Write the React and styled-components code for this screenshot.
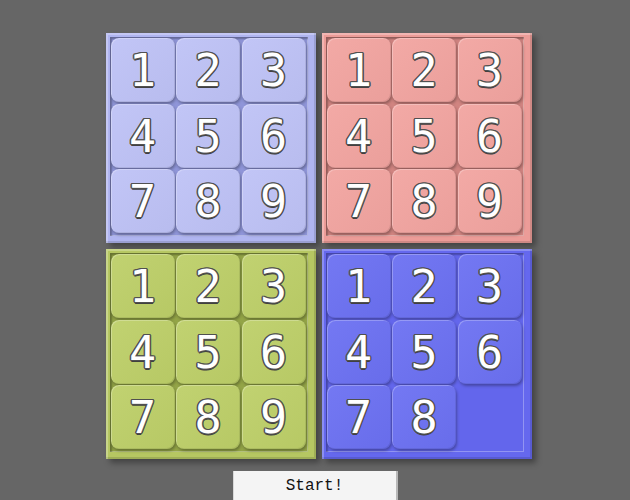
import React from "react";
import styled, { createGlobalStyle } from "styled-components";

const GlobalStyle = createGlobalStyle`
  html, body {
    margin: 0;
    padding: 0;
    background: #666666;
    height: 100%;
    overflow: hidden;
  }
`;

const boards = [
  { frame: "#b0b5f0", well: "#8f95d8", tile: "#bec2f6", tiles: [1, 2, 3, 4, 5, 6, 7, 8, 9] },
  { frame: "#ec9c98", well: "#d08480", tile: "#f2a4a0", tiles: [1, 2, 3, 4, 5, 6, 7, 8, 9] },
  { frame: "#b6c762", well: "#93a447", tile: "#bdcf68", tiles: [1, 2, 3, 4, 5, 6, 7, 8, 9] },
  { frame: "#6568ee", well: "#6366ec", tile: "#6b70f2", tiles: [1, 2, 3, 4, 5, 6, 7, 8, null] },
];

const App = () => {
  return (
    <>
      <GlobalStyle />
      <Page>
        <BoardGrid>
          {boards.map((b, i) => (
            <Board key={i} $frame={b.frame}>
              <Well $well={b.well}>
                {b.tiles.map((n, j) =>
                  n ? (
                    <Tile key={j} $color={b.tile}>
                      {n}
                    </Tile>
                  ) : (
                    <Empty key={j} />
                  )
                )}
              </Well>
            </Board>
          ))}
        </BoardGrid>
        <StartButton>Start!</StartButton>
      </Page>
    </>
  );
};

export default App;

const Page = styled.main`
  display: flex;
  flex-direction: column;
  align-items: center;
  padding-top: 33px;
`;

const BoardGrid = styled.div`
  display: grid;
  grid-template-columns: repeat(2, 210px);
  gap: 6px 6px;
  margin-left: 7px;
`;

const Board = styled.div`
  width: 210px;
  height: 210px;
  box-sizing: border-box;
  padding: 4px 8px 7px 4px;
  background: ${(p) => p.$frame};
  box-shadow: inset 2px 2px 0 rgba(255, 255, 255, 0.25),
    inset -2px -2px 0 rgba(0, 0, 0, 0.12), 4px 4px 6px rgba(0, 0, 0, 0.35);
`;

const Well = styled.div`
  height: 100%;
  box-sizing: border-box;
  padding: 1px 2px 4px 1px;
  display: grid;
  grid-template-columns: repeat(3, 64px);
  grid-template-rows: repeat(3, 64px);
  gap: 1.5px;
  background: ${(p) => p.$well};
  box-shadow: inset 2px 2px 2px rgba(0, 0, 0, 0.3),
    inset -1px -1px 0 rgba(255, 255, 255, 0.3);
`;

const Tile = styled.div`
  display: flex;
  align-items: center;
  justify-content: center;
  border-radius: 8px;
  background: linear-gradient(135deg, rgba(255, 255, 255, 0.06), rgba(0, 0, 0, 0.03)),
    ${(p) => p.$color};
  box-shadow: inset 1px 1px 0 rgba(255, 255, 255, 0.25),
    inset -1px -1px 0 rgba(0, 0, 0, 0.08), 1px 2px 3px rgba(0, 0, 0, 0.3);
  font-family: "DejaVu Sans Mono", monospace;
  font-size: 45px;
  line-height: 1;
  padding-top: 1px;
  color: #ffffff;
  text-shadow: -1px -1px 0 #505050, 1px -1px 0 #505050, -1px 1px 0 #505050,
    1px 1px 0 #505050, 0 1.5px 0 #404040, 1.5px 0 0 #505050,
    -1.5px 0 0 #505050, 0 -1.5px 0 #505050;
  user-select: none;
`;

const Empty = styled.div``;

const StartButton = styled.button`
  margin-top: 12px;
  width: 165px;
  height: 30px;
  border: none;
  border-left: 1px solid #d8d8d8;
  border-right: 2px solid #b8b8b8;
  background: #f4f4f4;
  font-family: "Liberation Mono", monospace;
  font-size: 16px;
  color: #111;
  padding: 0;
`;
